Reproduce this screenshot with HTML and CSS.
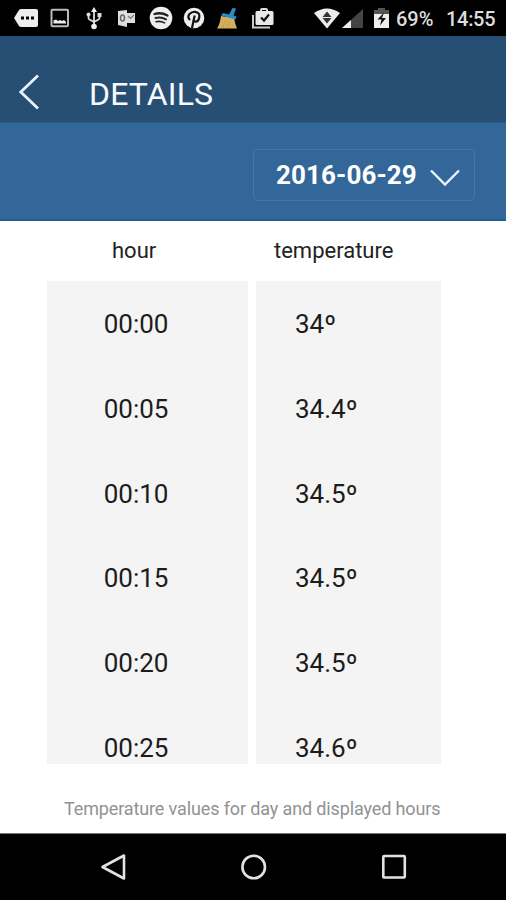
FILE: index.html
```html
<!DOCTYPE html>
<html lang="en">
<head>
<meta charset="utf-8">
<title>Details</title>
<link rel="stylesheet" href="styles.css">
</head>
<body>
<div class="screen">
  <div class="status-bar">
    <div class="notifications">
      <svg class="icon-message" width="24" height="24" viewBox="0 0 24 24"><path fill="#eee" d="M7 3h15q2 0 2 2v14q0 2-2 2H7q-1 0-2-1L0 12l5-8q1-1 2-1z"/><path d="M7 10.500h3v3H7zM12 10.500h3v3h-3zM17 10.500h3v3h-3z"/></svg>
      <svg class="icon-image" width="20" height="24" viewBox="0 0 20 24"><rect x="1.500" y="3.800" width="16.500" height="16.500" rx="1" fill="none" stroke="#bbb" stroke-width="2"/><path fill="#eee" d="M3.500 17.500v-3l2.500-1 2 1.500 2-1 2 1 2-1 2 2v1.500z"/></svg>
      <svg class="icon-usb" width="16" height="24" viewBox="0 0 16 24"><g fill="none" stroke="#ddd" stroke-width="1.800"><path d="M8 4v17M2.500 9v3q0 1 1 1.500L8 16l4.500-2.500q1-.5 1-1.500V9"/></g><path fill="#eee" d="M8 1l3 5H5z"/><circle cx="2.500" cy="8.500" r="2" fill="#ddd"/><path fill="#ddd" d="M11.500 7h4v4h-4z"/><circle cx="8" cy="20.500" r="2.800" fill="#eee"/></svg>
      <svg class="icon-outlook" width="19" height="24" viewBox="0 0 19 24"><path fill="#ddd" d="M1 5l9-1v17l-9-2zM10 7h8v10h-8z"/><ellipse cx="5.500" cy="12" rx="2" ry="3" fill="none" stroke="#666" stroke-width="1.500"/><path fill="none" stroke="#777" stroke-width="1.200" d="M11 10l2.500 2.500L17 9"/></svg>
      <svg class="icon-music" width="24" height="24" viewBox="0 0 24 24"><circle cx="12" cy="12" r="11.300" fill="#eee"/><g fill="none" stroke="#222" stroke-linecap="round"><path stroke-width="2.300" d="M5.500 8q7-2 13 1.500"/><path stroke-width="2" d="M6.500 12q5.500-1.500 10.500 1.300"/><path stroke-width="1.600" d="M7 15.700q4.500-1 8.500 1.200"/></g></svg>
      <svg class="icon-pin" width="22" height="24" viewBox="0 0 22 24"><circle cx="11" cy="12" r="10.300" fill="#eee"/><path fill="none" stroke="#111" stroke-width="2.200" d="M7 14q-3-3-.5-6Q9 5.500 12 5.800q5 .5 4.300 5.200-.8 5-4 4.700-2-.2-2.300-1.700M11.700 9.500L9 22"/></svg>
      <svg class="icon-broom" width="22" height="24" viewBox="0 0 22 24"><path fill="#d4ae5c" d="M4 10l13 2q1 6 3 10.500H0Q3 18 4 10z"/><path fill="none" stroke="#c39b4c" stroke-width=".8" d="M8 15l-2 7M12 15l-1 7"/><path fill="#248fc6" d="M6 7l6 1.500L15.500 2l3.500.5-2.500 7 3 1-1 3L4 9.500z"/></svg>
      <svg class="icon-bag" width="23" height="24" viewBox="0 0 23 24"><path fill="none" stroke="#ccc" stroke-width="2" d="M2 9v12.500h17"/><path fill="none" stroke="#ddd" stroke-width="2" d="M10 6V4q0-1 1-1h4q1 0 1 1v2"/><rect x="4.500" y="5" width="18" height="14" rx="1.500" fill="#e8e8e8"/><path fill="none" stroke="#111" stroke-width="2.200" d="M10 11.500l3 3 5-6"/></svg>
    </div>
    <div class="system">
      <svg class="icon-wifi" width="26" height="24" viewBox="0 0 26 24"><path fill="#eee" d="M0 7Q13-2 26 7L13 22.500z"/><path d="M13 5.500l4.500 5.500h-9zM8.500 12h9L13 17.500z" fill="#333"/></svg>
      <svg class="icon-signal" width="21" height="24" viewBox="0 0 21 24"><path fill="#444" d="M21 3v19H0z"/><path fill="#eee" d="M9 14v8H0z"/></svg>
      <svg class="icon-battery" width="15" height="24" viewBox="0 0 15 24"><path fill="#555" d="M4 2h7v2h4v5H0V4h4z"/><path fill="#eee" d="M0 8h15v14H0z"/><path d="M10 6.500L3.500 13.500h4l-1.500 6 6-7.500H8z" fill="#111"/></svg>
      <span class="percent">69%</span>
      <span class="clock">14:55</span>
    </div>
  </div>
  <header class="title-bar">
    <svg class="back" width="22" height="38" viewBox="0 0 22 38"><path d="M20 2.500L2.800 19 20 35.500" fill="none" stroke="#e9f2fb" stroke-width="2.800"/></svg>
    <h1>DETAILS</h1>
  </header>
  <div class="date-bar">
    <div class="date-select">
      <span>2016-06-29</span>
      <svg width="30" height="18" viewBox="0 0 30 18"><path d="M1 1.500l14 14 14-14" fill="none" stroke="#e9f2fb" stroke-width="2.400"/></svg>
    </div>
  </div>
  <main>
    <div class="headings"><span class="hour-heading">hour</span><span>temperature</span></div>
    <div class="table">
      <div class="column hours"><div>00:00</div><div>00:05</div><div>00:10</div><div>00:15</div><div>00:20</div><div>00:25</div></div>
      <div class="column temps"><div>34º</div><div>34.4º</div><div>34.5º</div><div>34.5º</div><div>34.5º</div><div>34.6º</div></div>
    </div>
    <p class="note">Temperature values for day and displayed hours</p>
  </main>
  <nav class="nav-bar">
    <svg width="28" height="28" viewBox="0 0 28 28"><path d="M25 2.500v23L3.500 14z"/></svg>
    <svg width="28" height="28" viewBox="0 0 28 28"><circle cx="13.700" cy="14" r="11.300"/></svg>
    <svg width="28" height="28" viewBox="0 0 28 28"><rect x="3.300" y="3" width="21.500" height="21.500" rx="1"/></svg>
  </nav>
</div>
</body>
</html>
```
FILE: styles.css
```css
* { box-sizing: border-box; }
body { margin: 0; font-family: Roboto, "Liberation Sans", sans-serif; background: #fff; }
svg { display: block; flex: none; }
.screen { width: 506px; height: 900px; display: flex; flex-direction: column; overflow: hidden; }

.status-bar { height: 36px; flex: none; background: #000; color: #ddd; display: flex; justify-content: space-between; padding: 6px 10px 0 14px; }
.notifications, .system { display: flex; }
.icon-image { margin-left: 12px; }
.icon-usb { margin-left: 16px; }
.icon-outlook { margin-left: 15px; }
.icon-music { margin-left: 13px; }
.icon-pin { margin-left: 10px; }
.icon-broom { margin-left: 12px; }
.icon-bag { margin-left: 12px; }
.icon-signal { margin-left: 2px; }
.icon-battery { margin-left: 11px; }
.system span { font-size: 20px; font-weight: 500; line-height: 26px; white-space: nowrap; }
.percent { margin-left: 7px; width: 50px; }
.system .clock { width: 50px; letter-spacing: -0.3px; }

.title-bar { height: 87px; flex: none; background: #274e73; border-bottom: 1px solid #2b5880; display: flex; padding: 37px 0 0 18px; }
.title-bar h1 { margin: -1px 0 0 49px; color: #f6faff; font-size: 32px; font-weight: 400; line-height: 44px; letter-spacing: 0.15px; }
.date-bar { height: 98px; flex: none; background: #336799; border-bottom: 2px solid #225f97; padding: 26px 31px 0; display: flex; justify-content: flex-end; }
.date-select { width: 222px; height: 52px; border: 1px solid #4a759f; border-radius: 5px; display: flex; align-items: center; padding-left: 22px; color: #fff; }
.date-select span { width: 141px; font-size: 26px; font-weight: 700; letter-spacing: 0.1px; white-space: nowrap; }
.date-select svg { margin: 5px 0 0 13px; }

main { flex: 1; padding: 0 65px 0 47px; }
.headings { height: 60px; padding-top: 16px; display: flex; color: #222; font-size: 22px; line-height: 28px; }
.hour-heading { width: 162px; padding-left: 65px; }
.headings span + span { margin-left: 65px; }
.table { display: flex; gap: 8px; height: 483px; overflow: hidden; }
.column { background: #f4f4f4; color: #1c1c1c; font-size: 26px; }
.column div { height: 84.800px; line-height: 86px; border-bottom: 1px solid #f6f6f6; white-space: nowrap; }
.hours { width: 201px; }
.hours div { padding-left: 56.700px; }
.temps { width: 185px; }
.temps div { padding-left: 39px; }
.note { margin: 33px 0 0 17px; color: #929292; font-size: 18px; letter-spacing: -0.13px; line-height: 24px; white-space: nowrap; }

.nav-bar { height: 67px; flex: none; background: #000; border-top: 1px solid #777; display: flex; justify-content: space-between; padding: 19px 98px 0 99px; }
.nav-bar svg { fill: none; stroke: #e2e2e2; stroke-width: 2.600; stroke-linejoin: round; }
```
